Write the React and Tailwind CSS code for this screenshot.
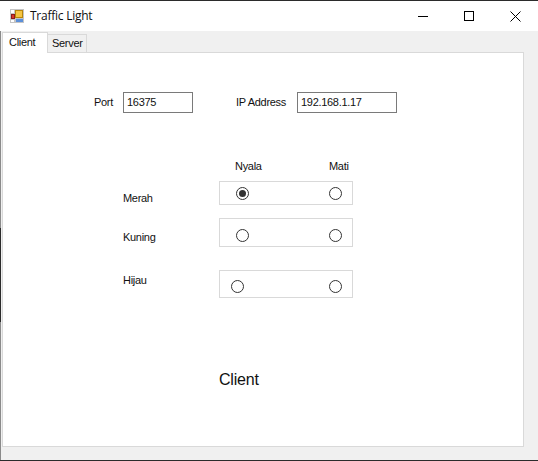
import React from 'react';

function Radio({ on }) {
    return (
        <span className="flex h-[13px] w-[13px] items-center justify-center rounded-full border border-[#333] bg-white">
            {on && <span className="h-[7px] w-[7px] rounded-full bg-[#333]" />}
        </span>
    );
}

function TrafficIcon() {
    return (
        <svg width="14" height="14" viewBox="0 0 14 14" className="shrink-0">
            <rect x="0" y="0" width="14" height="14" fill="#c4c4c4" />
            <rect x="1" y="1" width="3" height="3" fill="#fff" />
            <rect x="1" y="11" width="3" height="2" fill="#fff" />
            <rect x="5" y="1" width="8" height="8" fill="#b8860b" />
            <rect x="6" y="2" width="6" height="6" fill="#f5c542" />
            <rect x="1" y="5" width="4" height="5" fill="#8c1c1c" />
            <rect x="2" y="6" width="2" height="3" fill="#d9352b" />
            <rect x="6" y="10" width="7" height="3" fill="#5b8fd9" />
        </svg>
    );
}

export default function App() {
    return (
        <div className='flex h-[461px] w-[538px] flex-col border-b border-t border-[#2b2b2b] bg-[#f0f0f0] font-["Liberation_Sans",sans-serif] text-[11px] tracking-[-0.3px] text-[#111]'>
            <div className="flex h-[30px] shrink-0 items-center bg-white pl-[10px]">
                <TrafficIcon />
                <span className='ml-[6px] font-["Open_Sans",sans-serif] text-[12px] tracking-[-0.25px]'>Traffic Light</span>
                <div className="ml-auto flex h-full items-center">
                    <div className="flex h-full w-[46px] items-center justify-center">
                        <span className="h-px w-[10px] bg-black" />
                    </div>
                    <div className="flex h-full w-[46px] items-center justify-center">
                        <span className="h-[10px] w-[10px] border border-black" />
                    </div>
                    <div className="flex h-full w-[46px] items-center justify-center">
                        <svg width="11" height="11" viewBox="0 0 11 11" stroke="black" strokeWidth="1">
                            <path d="M0.5 0.5l10 10M10.5 0.5l-10 10" />
                        </svg>
                    </div>
                </div>
            </div>

            <div className="flex flex-1">
                {/* window edge, darker where the window behind shows through */}
                <div className="flex w-px flex-col">
                    <span className="h-[197px] bg-[#8a8a8a]" />
                    <span className="h-[94px] bg-[#2b2b2b]" />
                    <span className="flex-1 bg-[#8a8a8a]" />
                </div>
                <div className="flex flex-1 flex-col pl-px pr-[14px] pt-px">
                    <div className="flex h-[20px] items-end">
                        <div className="relative z-10 -mb-px flex h-[21px] w-[46px] items-center border border-b-0 border-[#d9d9d9] bg-white pb-[2px] pl-[6px]">Client</div>
                        <div className="flex h-[18px] w-[39px] items-center border border-b-0 border-l-0 border-[#d9d9d9] pl-[4px]">Server</div>
                    </div>
                    <div className="flex h-[395px] flex-col border border-[#d9d9d9] bg-white">
                        <div className="ml-[91px] mt-[39px] flex h-[21px] items-center">
                            <span className="w-[29px]">Port</span>
                            <div className="flex h-[21px] w-[70px] items-center border border-[#7a7a7a] pl-[3px]">16375</div>
                            <span className="ml-[43px] w-[61px]">IP Address</span>
                            <div className="flex h-[21px] w-[100px] items-center border border-[#7a7a7a] pl-[3px]">192.168.1.17</div>
                        </div>

                        <div className="ml-[232px] mt-[46px] flex h-[14px] items-center">
                            <span className="w-[94px]">Nyala</span>
                            <span>Mati</span>
                        </div>

                        <div className="ml-[120px] mt-[8px] flex h-[24px] w-[230px]">
                            <span className="mt-[9px] w-[96px]">Merah</span>
                            <div className="flex h-[24px] w-[134px] items-center justify-between border border-[#d9d9d9] pl-[16px] pr-[10px] pt-px">
                                <Radio on />
                                <Radio />
                            </div>
                        </div>
                        <div className="ml-[120px] mt-[13px] flex h-[29px] w-[230px]">
                            <span className="mt-[11px] w-[96px]">Kuning</span>
                            <div className="flex h-[29px] w-[134px] items-center justify-between border border-[#d9d9d9] pl-[16px] pr-[10px] pt-[6px]">
                                <Radio />
                                <Radio />
                            </div>
                        </div>
                        <div className="ml-[120px] mt-[23px] flex h-[28px] w-[230px]">
                            <span className="mt-[2px] w-[96px]">Hijau</span>
                            <div className="flex h-[28px] w-[134px] items-center justify-between border border-[#d9d9d9] pl-[11px] pr-[10px] pt-[4px]">
                                <Radio />
                                <Radio />
                            </div>
                        </div>

                        <div className="ml-[216px] mt-[72px] text-[16px] leading-[20px] tracking-[-0.2px]">Client</div>
                    </div>
                </div>
            </div>
        </div>
    );
}
